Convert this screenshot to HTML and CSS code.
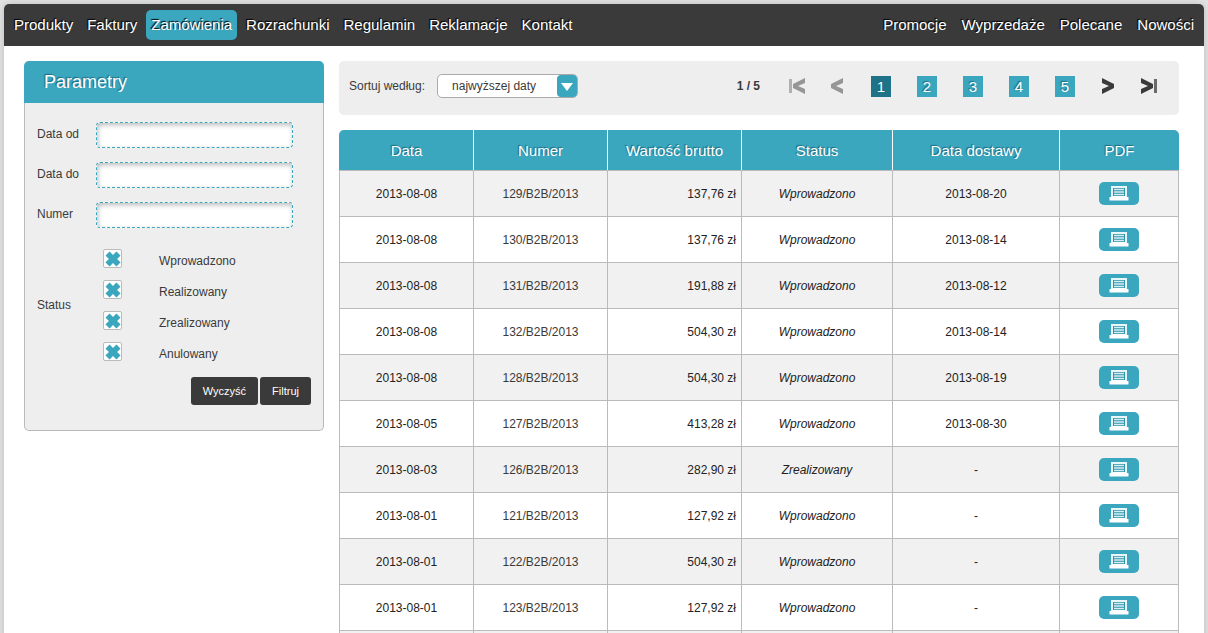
FILE: index.html
```html
<!DOCTYPE html>
<html lang="pl">
<head>
<meta charset="utf-8">
<meta name="viewport" content="width=device-width, initial-scale=1">
<title>Zamówienia</title>
<link rel="stylesheet" href="styles.css">
</head>
<body>
<svg class="sprite" aria-hidden="true">
  <symbol id="print" viewBox="0 0 20 15">
    <path d="M3 1H17V11H3Z" fill="#3ba7bf" stroke="#e8f6f9" stroke-width="2"/>
    <path d="M4 2H16V10H4Z" fill="#2f93aa"/>
    <path d="M5 3.500H15M5 6H15M5 8.500H15" stroke="#d5eff4" stroke-width="1.500"/>
    <path d="M.5 11H3.500L4.500 10H15.500L16.500 11H19.500V14.500H.5Z" fill="#fff"/>
  </symbol>
</svg>
<div class="shell">
  <header class="topbar">
    <nav class="menu" aria-label="Menu główne">
      <a href="#">Produkty</a>
      <a href="#">Faktury</a>
      <a href="#" class="active" aria-current="page">Zamówienia</a>
      <a href="#">Rozrachunki</a>
      <a href="#">Regulamin</a>
      <a href="#">Reklamacje</a>
      <a href="#">Kontakt</a>
    </nav>
    <nav class="menu offers" aria-label="Oferty">
      <a href="#">Promocje</a>
      <a href="#">Wyprzedaże</a>
      <a href="#">Polecane</a>
      <a href="#">Nowości</a>
    </nav>
  </header>

  <main class="content">
    <form class="panel">
      <h2 class="panel-title">Parametry</h2>
      <div class="panel-body">
        <div class="field"><label for="from">Data od</label><input class="text" type="text" id="from"></div>
        <div class="field"><label for="to">Data do</label><input class="text" type="text" id="to"></div>
        <div class="field"><label for="number">Numer</label><input class="text" type="text" id="number"></div>
        <div class="status" role="group" aria-labelledby="status-label">
          <span id="status-label">Status</span>
          <div class="checks">
            <label class="check"><input type="checkbox" checked><span>Wprowadzono</span></label>
            <label class="check"><input type="checkbox" checked><span>Realizowany</span></label>
            <label class="check"><input type="checkbox" checked><span>Zrealizowany</span></label>
            <label class="check"><input type="checkbox" checked><span>Anulowany</span></label>
          </div>
        </div>
        <div class="actions">
          <button type="reset">Wyczyść</button>
          <button type="button">Filtruj</button>
        </div>
      </div>
    </form>

    <section class="orders">
      <div class="toolbar">
        <div class="sort">
          <label for="sort">Sortuj według:</label>
          <span class="select"><select id="sort"><option>najwyższej daty</option></select></span>
        </div>
        <nav class="pager" aria-label="Strony">
          <strong class="count">1 / 5</strong>
          <a href="#" class="off" aria-label="Pierwsza"><svg width="16" height="16" viewBox="0 0 16 16"><path d="M0 1H3V15H0Z" fill="#b0b0b0"/><path d="M16 0V5L9 8L16 11V16L4 10V6Z" fill="#969696"/></svg></a>
          <a href="#" class="off" aria-label="Poprzednia"><svg width="12" height="16" viewBox="0 0 12 16"><path d="M12 0V5L5 8L12 11V16L0 10V6Z" fill="#969696"/></svg></a>
          <span class="pages">
            <a href="#" class="current" aria-current="page">1</a>
            <a href="#">2</a>
            <a href="#">3</a>
            <a href="#">4</a>
            <a href="#">5</a>
          </span>
          <a href="#" aria-label="Następna"><svg width="13" height="16" viewBox="0 0 13 16"><path d="M0 0L12 6V10L0 16V11L7 8L0 5Z" fill="#3a3a3a"/></svg></a>
          <a href="#" aria-label="Ostatnia"><svg width="17" height="16" viewBox="0 0 17 16"><path d="M13 1H16V15H13Z" fill="#6a6a6a"/><path d="M0 0L12 6V10L0 16V11L7 8L0 5Z" fill="#3a3a3a"/></svg></a>
        </nav>
      </div>

      <table class="grid">
        <colgroup><col class="c-date"><col class="c-date"><col class="c-date"><col class="c-status"><col class="c-delivery"><col class="c-pdf"></colgroup>
        <thead>
          <tr><th>Data</th><th>Numer</th><th>Wartość brutto</th><th>Status</th><th>Data dostawy</th><th>PDF</th></tr>
        </thead>
        <tbody>
          <tr><td>2013-08-08</td><td class="no">129/B2B/2013</td><td class="sum">137,76 zł</td><td class="state">Wprowadzono</td><td>2013-08-20</td><td><a href="#" class="pdf" aria-label="PDF"><svg width="20" height="15"><use href="#print"/></svg></a></td></tr>
          <tr><td>2013-08-08</td><td class="no">130/B2B/2013</td><td class="sum">137,76 zł</td><td class="state">Wprowadzono</td><td>2013-08-14</td><td><a href="#" class="pdf" aria-label="PDF"><svg width="20" height="15"><use href="#print"/></svg></a></td></tr>
          <tr><td>2013-08-08</td><td class="no">131/B2B/2013</td><td class="sum">191,88 zł</td><td class="state">Wprowadzono</td><td>2013-08-12</td><td><a href="#" class="pdf" aria-label="PDF"><svg width="20" height="15"><use href="#print"/></svg></a></td></tr>
          <tr><td>2013-08-08</td><td class="no">132/B2B/2013</td><td class="sum">504,30 zł</td><td class="state">Wprowadzono</td><td>2013-08-14</td><td><a href="#" class="pdf" aria-label="PDF"><svg width="20" height="15"><use href="#print"/></svg></a></td></tr>
          <tr><td>2013-08-08</td><td class="no">128/B2B/2013</td><td class="sum">504,30 zł</td><td class="state">Wprowadzono</td><td>2013-08-19</td><td><a href="#" class="pdf" aria-label="PDF"><svg width="20" height="15"><use href="#print"/></svg></a></td></tr>
          <tr><td>2013-08-05</td><td class="no">127/B2B/2013</td><td class="sum">413,28 zł</td><td class="state">Wprowadzono</td><td>2013-08-30</td><td><a href="#" class="pdf" aria-label="PDF"><svg width="20" height="15"><use href="#print"/></svg></a></td></tr>
          <tr><td>2013-08-03</td><td class="no">126/B2B/2013</td><td class="sum">282,90 zł</td><td class="state">Zrealizowany</td><td>-</td><td><a href="#" class="pdf" aria-label="PDF"><svg width="20" height="15"><use href="#print"/></svg></a></td></tr>
          <tr><td>2013-08-01</td><td class="no">121/B2B/2013</td><td class="sum">127,92 zł</td><td class="state">Wprowadzono</td><td>-</td><td><a href="#" class="pdf" aria-label="PDF"><svg width="20" height="15"><use href="#print"/></svg></a></td></tr>
          <tr><td>2013-08-01</td><td class="no">122/B2B/2013</td><td class="sum">504,30 zł</td><td class="state">Wprowadzono</td><td>-</td><td><a href="#" class="pdf" aria-label="PDF"><svg width="20" height="15"><use href="#print"/></svg></a></td></tr>
          <tr><td>2013-08-01</td><td class="no">123/B2B/2013</td><td class="sum">127,92 zł</td><td class="state">Wprowadzono</td><td>-</td><td><a href="#" class="pdf" aria-label="PDF"><svg width="20" height="15"><use href="#print"/></svg></a></td></tr>
          <tr><td></td><td></td><td></td><td></td><td></td><td></td></tr>
        </tbody>
      </table>
    </section>
  </main>
</div>
</body>
</html>
```
FILE: styles.css
```css
* {
  box-sizing: border-box;
}

body {
  margin: 0;
  padding: 4px 4px 0;
  background: #e4e4e4;
  color: #3a3a3a;
  font: 12px/16px "Liberation Sans", Arial, sans-serif;
}

a {
  color: inherit;
  text-decoration: none;
}

button,
input,
select {
  margin: 0;
  font: inherit;
  color: inherit;
}

svg {
  display: block;
}

.sprite {
  display: none;
}

.shell {
  background: #fff;
  border-radius: 5px 5px 0 0;
  box-shadow: 0 0 10px #bbb;
}

.topbar {
  display: flex;
  justify-content: space-between;
  padding: 6px 5px;
  background: #3a3a3a;
  border-radius: 5px 5px 0 0;
}

.menu {
  display: flex;
  gap: 4px;
}

.offers {
  gap: 5px;
}

.menu a {
  padding: 0 5px;
  border-radius: 5px;
  color: #fff;
  font-size: 15px;
  line-height: 30px;
  text-shadow: -1px -1px 1px #000;
}

.menu .active {
  background: #3ba7bf;
}

.content {
  display: flex;
  align-items: flex-start;
  gap: 15px;
  padding: 15px 25px 0 20px;
}

.panel {
  flex: none;
  width: 300px;
}

.panel-title {
  margin: 0;
  padding: 1px 20px 0;
  background: #3ba7bf;
  border-radius: 5px 5px 0 0;
  color: #fff;
  font-size: 18px;
  font-weight: normal;
  line-height: 41px;
  text-shadow: -1px -1px 1px #1d6a7b;
}

.panel-body {
  padding: 19px 12px 25px;
  background: #eee;
  border: 1px solid #b9b9b9;
  border-top: 0;
  border-radius: 0 0 5px 5px;
}

.field {
  display: grid;
  grid-template-columns: 59px 197px;
  align-items: center;
  margin-bottom: 14px;
}

.field label {
  padding-bottom: 3px;
}

.text {
  width: 100%;
  height: 26px;
  padding: 0 6px;
  background: #fff;
  border: 1px dashed #3ba7bf;
  border-radius: 4px;
  box-shadow: inset 1px 2px 5px #bbb;
}

.status {
  display: grid;
  grid-template-columns: 66px 1fr;
  align-items: center;
  padding-top: 7px;
}

.checks {
  display: grid;
  gap: 12px;
}

.check {
  display: grid;
  grid-template-columns: 19px 1fr;
  column-gap: 37px;
  height: 19px;
}

.check span {
  padding-top: 4px;
}

.check input {
  appearance: none;
  display: grid;
  place-items: center;
  width: 19px;
  height: 19px;
  background: #fff;
  border: 1px solid #bbb;
  border-radius: 2px;
}

.check input:checked::before {
  content: "";
  width: 16px;
  height: 16px;
  background: #3ba7bf;
  clip-path: polygon(32% 0, 68% 0, 68% 32%, 100% 32%, 100% 68%, 68% 68%, 68% 100%, 32% 100%, 32% 68%, 0 68%, 0 32%, 32% 32%);
  transform: rotate(45deg);
}

.actions {
  display: flex;
  justify-content: flex-end;
  gap: 2px;
  padding-top: 16px;
}

.actions button {
  padding: 0 12px;
  background: #3a3a3a;
  border: 0;
  border-radius: 3px;
  color: #fff;
  font-size: 11px;
  line-height: 28px;
}

.orders {
  flex: 1;
  min-width: 0;
}

.toolbar {
  display: flex;
  justify-content: space-between;
  align-items: center;
  margin-bottom: 15px;
  padding: 12px 21px 16px 10px;
  background: #eee;
  border-radius: 5px;
}

.sort {
  display: flex;
  align-items: center;
  gap: 12px;
}

.select {
  position: relative;
}

.select select {
  appearance: none;
  display: block;
  width: 141px;
  height: 24px;
  padding: 0 24px 0 14px;
  background: #fff;
  border: 1px solid #aaa;
  border-radius: 5px;
}

.select::before {
  content: "";
  position: absolute;
  top: 1px;
  right: 1px;
  width: 20px;
  height: 22px;
  background: #3ba7bf;
  border-radius: 4px;
  pointer-events: none;
}

.select::after {
  content: "";
  position: absolute;
  top: 9px;
  right: 5px;
  border: 6px solid transparent;
  border-top: 8px solid #fff;
  border-bottom: 0;
  pointer-events: none;
}

.pager {
  display: flex;
  align-items: center;
  gap: 26px;
  height: 26px;
}

.count {
  padding-right: 3px;
}

.pages {
  display: flex;
  gap: 26px;
  margin: 0 1px 0 2px;
}

.pages a {
  width: 20px;
  background: #3ba7bf;
  color: #fff;
  font-size: 15px;
  line-height: 21px;
  text-align: center;
  text-shadow: -1px -1px 1px #1d6a7b;
}

.pages .current {
  background: #1f7388;
}

.grid {
  width: 100%;
  table-layout: fixed;
  border-spacing: 0;
  text-align: center;
}

.c-date {
  width: 134px;
}

.c-status {
  width: 151px;
}

.c-delivery {
  width: 167px;
}

.c-pdf {
  width: 120px;
}

.grid th {
  height: 40px;
  padding: 1px 0 0;
  background: #3ba7bf;
  border-left: 1px solid #fff;
  color: #fff;
  font-size: 15px;
  font-weight: normal;
  text-shadow: -1px -1px 1px #1d6a7b;
}

.grid th:first-child {
  border-left-color: #3ba7bf;
  border-top-left-radius: 5px;
}

.grid th:last-child {
  border-top-right-radius: 5px;
}

.grid td {
  height: 46px;
  padding: 0 5px;
  border: solid #bbb;
  border-width: 1px 0 0 1px;
  color: #222;
}

.grid td:last-child {
  border-right-width: 1px;
}

.grid tbody tr:nth-child(odd) {
  background: #f1f1f1;
}

.grid .no {
  color: #3a3a3a;
}

.grid .sum {
  text-align: right;
}

.grid .state {
  font-style: italic;
}

.pdf {
  display: flex;
  justify-content: center;
  align-items: center;
  width: 40px;
  height: 23px;
  margin: 0 auto;
  background: #3ba7bf;
  border-radius: 5px;
}
```
